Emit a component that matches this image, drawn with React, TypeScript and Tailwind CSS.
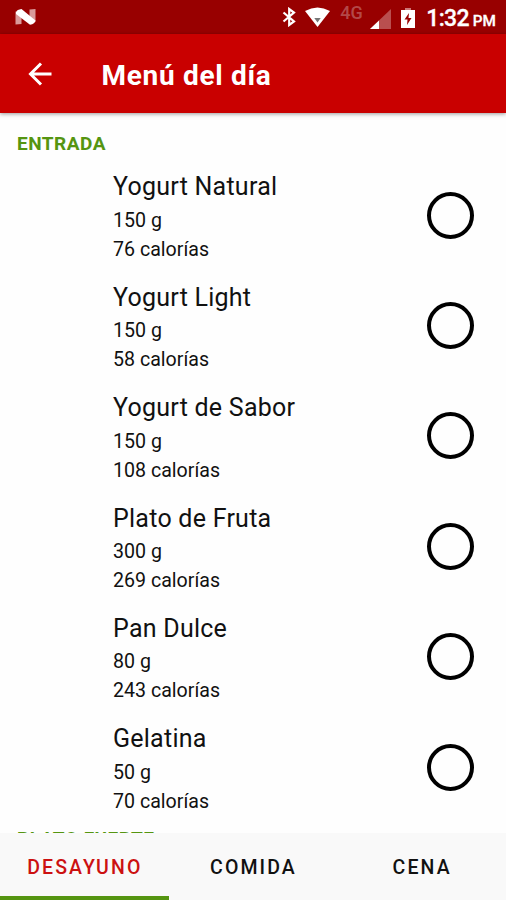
interface MenuItem {
    name: string;
    grams: number;
    calories: number;
}

const ITEMS: MenuItem[] = [
    { name: 'Yogurt Natural', grams: 150, calories: 76 },
    { name: 'Yogurt Light', grams: 150, calories: 58 },
    { name: 'Yogurt de Sabor', grams: 150, calories: 108 },
    { name: 'Plato de Fruta', grams: 300, calories: 269 },
    { name: 'Pan Dulce', grams: 80, calories: 243 },
    { name: 'Gelatina', grams: 50, calories: 70 },
];

const TABS = ['DESAYUNO', 'COMIDA', 'CENA'];

function StatusBar() {
    return (
        <div className="flex h-[34px] shrink-0 items-center bg-[#980000] pl-[15px] pr-[10px] text-white">
            {/* Android N logo */}
            <svg className="h-4 w-[21px]" viewBox="0 0 21 16">
                <path d="M0.5 2.5 L6.5 5.5 V15 L0.5 15.5 Z" fill="#d99a9a" />
                <path d="M14.5 0.5 L20.5 0 V13 L14.5 9.5 Z" fill="#d99a9a" />
                <path d="M1 3 Q2 0.5 6.5 0 L20.5 11.5 Q20 15 15 15.8 L1 5 Z" fill="#fff" />
            </svg>
            <div className="flex-1" />
            <svg className="mr-[9px] h-5 w-[14px]" viewBox="0 0 14 20" fill="none" stroke="#fff" strokeWidth="2.2">
                <path d="M1.5 5.5 L12 14.5 L7.2 18 V2 L12 5.5 L1.5 14.5" />
            </svg>
            <svg className="mr-[10px] h-5 w-[25px]" viewBox="0 0 25 20">
                <path d="M0 4 Q12.5 -3 25 4 L12.5 20 Z" fill="#fff" />
                <path d="M9.3 11 H15.7 L12.5 15.5 Z" fill="#777" />
            </svg>
            <span className="mr-[6px] -mt-2 w-6 text-[18px] font-medium leading-none text-[#b34848]">4G</span>
            <svg className="mr-[10px] mt-[3px] h-5 w-[21px]" viewBox="0 0 21 20">
                <path d="M0 20 L21 0 V20 Z" fill="#b94f4f" />
                <path d="M0 20 L9 11.5 V20 Z" fill="#fff" />
            </svg>
            <svg className="mr-[11px] mt-px h-5 w-[14px]" viewBox="0 0 14 20">
                <path d="M4 0 H10 V3 H4 Z" fill="#c77" />
                <path d="M0 2 H14 V20 H0 Z" fill="#fff" />
                <path d="M8 5 L3.5 11.5 H6.5 L6 17 L10.5 10 H7.5 Z" fill="#980000" />
            </svg>
            <div className="flex items-baseline pt-[3px] font-medium leading-none">
                <span className="w-[46.5px] text-[23px] tracking-[-0.7px] [-webkit-text-stroke:0.3px_white]">1:32</span>
                <span className="text-[15.3px] [-webkit-text-stroke:0.3px_white]">PM</span>
            </div>
        </div>
    );
}

function Toolbar() {
    return (
        <header className="z-10 flex h-[79px] shrink-0 items-center bg-[#c90000] pl-7 text-white shadow-[0_1px_4px_rgba(0,0,0,0.4)]">
            <svg className="h-6 w-6" viewBox="0 0 24 24" fill="none" stroke="#fff" strokeWidth="3">
                <path d="M23.5 12 H2.5 M13 1.5 L2.5 12 L13 22.5" />
            </svg>
            <h1 className="ml-[49.5px] pt-[5px] text-[28px] font-bold leading-8 tracking-[0.7px]">Menú del día</h1>
        </header>
    );
}

function SectionTitle({ children }: { children: string }) {
    return <h2 className="pl-[17px] text-[19px] font-bold leading-6 tracking-[0.5px] text-[#559511]">{children}</h2>;
}

function ItemRow({ item }: { item: MenuItem }) {
    return (
        <li className="flex h-[110.4px] items-start justify-between pl-[113px] pr-8">
            <div className="text-[#111]">
                <p className="text-[25px] leading-8 tracking-[0.25px]">{item.name}</p>
                <p className="mt-[2.4px] text-[19.6px] leading-[29px]">{item.grams} g</p>
                <p className="text-[19.6px] leading-[30px]">{item.calories} calorías</p>
            </div>
            <button className="mt-[20.3px] size-[47px] rounded-full border-4 border-black" aria-label={item.name} />
        </li>
    );
}

export default function App() {
    return (
        <div className="flex h-[900px] w-[506px] flex-col overflow-hidden bg-[#fefefe] font-['Roboto',sans-serif]">
            <StatusBar />
            <Toolbar />
            <main className="min-h-0 flex-1 overflow-hidden pt-[19px]">
                <SectionTitle>ENTRADA</SectionTitle>
                <ul className="mt-[15.4px] -mb-[7px]">
                    {ITEMS.map((item) => (
                        <ItemRow key={item.name} item={item} />
                    ))}
                </ul>
                <SectionTitle>PLATO FUERTE</SectionTitle>
            </main>
            <nav className="grid h-[67px] shrink-0 grid-cols-3 bg-[#f9f9f9]">
                {TABS.map((tab, idx) => (
                    <button
                        key={tab}
                        className={`border-b-4 pt-[6px] pl-px text-[19.5px] font-medium tracking-[2.1px] ${idx === 0 ? 'border-[#559511] text-[#cc1111]' : 'border-transparent text-[#111]'}`}
                    >
                        {tab}
                    </button>
                ))}
            </nav>
        </div>
    );
}
